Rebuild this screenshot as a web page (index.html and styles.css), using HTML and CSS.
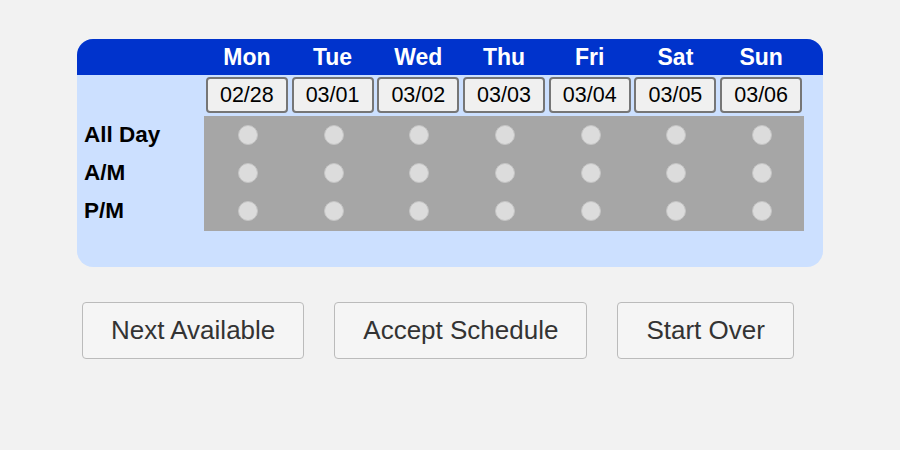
FILE: index.html
```html
<!DOCTYPE html>
<html lang="en">
<head>
  <meta charset="UTF-8">
  <title>Weekly Availability</title>
  <link rel="stylesheet" href="styles.css">
</head>
<body>
  <div class="page">
    <!-- Schedule grid -->
    <div class="schedule">
      <div class="days">
        <span></span>
        <span>Mon</span>
        <span>Tue</span>
        <span>Wed</span>
        <span>Thu</span>
        <span>Fri</span>
        <span>Sat</span>
        <span>Sun</span>
      </div>

      <div class="dates">
        <span></span>
        <button class="date">02/28</button>
        <button class="date">03/01</button>
        <button class="date">03/02</button>
        <button class="date">03/03</button>
        <button class="date">03/04</button>
        <button class="date">03/05</button>
        <button class="date">03/06</button>
      </div>

      <div class="slots">
        <div class="labels">
          <div>All Day</div>
          <div>A/M</div>
          <div>P/M</div>
        </div>
        <div class="grid" id="grid"></div>
      </div>
    </div>

    <!-- Actions -->
    <div class="actions">
      <button class="action">Next Available</button>
      <button class="action">Accept Schedule</button>
      <button class="action">Start Over</button>
    </div>
  </div>

  <script>
    // Fill the grid with one dot per day and period
    const grid = document.getElementById('grid');
    for (let i = 0; i < 21; i++) {
      const cell = document.createElement('div');
      cell.classList.add('cell');
      cell.innerHTML = '<span class="dot"></span>';
      grid.appendChild(cell);
    }
  </script>
</body>
</html>
```

FILE: styles.css
```css
/* Page */
body {
  margin: 0;
  background: #f2f2f2;
  font-family: 'Liberation Sans', Arial, sans-serif;
}

.page {
  padding: 39px 77px;
}

/* Schedule panel */
.schedule {
  width: 746px;
  background: #cce0ff;
  border-radius: 16px;
  overflow: hidden;
  padding-bottom: 36px;
}

.days,
.dates {
  display: grid;
  grid-template-columns: 127px repeat(7, 1fr);
  padding-right: 19px;
}

.days {
  background: #0033cc;
  height: 36px;
  align-items: center;
}

.days span {
  color: #fff;
  font-weight: bold;
  font-size: 23px;
  text-align: center;
}

.dates {
  height: 41px;
  align-items: start;
  padding-top: 2px;
  box-sizing: border-box;
}

.date {
  justify-self: center;
  width: 82px;
  height: 36px;
  padding: 0;
  font-family: inherit;
  font-size: 21.5px;
  color: #000;
  background: #f0f0f0;
  border: 2px solid #767676;
  border-radius: 4px;
}

/* Rows of dots */
.slots {
  display: flex;
}

.labels {
  width: 127px;
}

.labels div {
  height: 38px;
  line-height: 38px;
  padding-left: 7px;
  font-size: 22.5px;
  font-weight: bold;
  color: #000;
}

.grid {
  width: 600px;
  display: grid;
  grid-template-columns: repeat(7, 1fr);
  grid-auto-rows: 38px;
  background: #a6a6a6;
  padding-bottom: 1px;
}

.cell {
  display: flex;
  align-items: center;
  justify-content: center;
  padding-left: 2px;
}

.dot {
  width: 18px;
  height: 18px;
  border-radius: 50%;
  background: #dcdcdc;
  border: 1px solid #c4c4c4;
}

/* Buttons below the grid */
.actions {
  display: flex;
  gap: 30px;
  margin-top: 35px;
  padding-left: 5px;
}

.action {
  height: 57px;
  padding: 0 28px;
  font-family: inherit;
  font-size: 26px;
  color: #333;
  background: #f5f5f5;
  border: 1px solid #bbb;
  border-radius: 4px;
}
```
